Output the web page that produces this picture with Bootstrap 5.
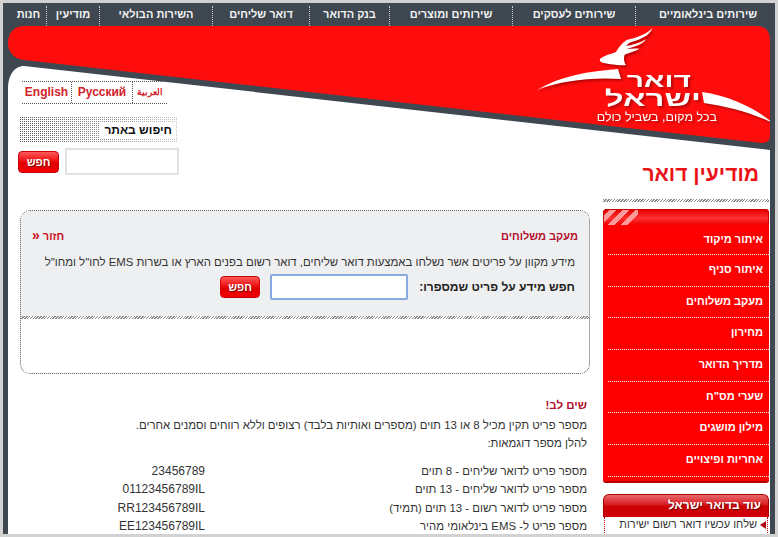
<!DOCTYPE html>
<html lang="he" dir="rtl">
<head>
  <meta charset="UTF-8" />
  <title>מודיעין דואר</title>
  <link href="https://cdn.jsdelivr.net/npm/bootstrap@5.3.0/dist/css/bootstrap.min.css" rel="stylesheet">
  <style>
    html, body { height: 537px; overflow: hidden; background: #d2d2d2; }
    body { font-family: "Liberation Sans", Arial, sans-serif; font-size: 11.4px; color: #333; }
    .sheet {
      height: 537px;
      border: 3px solid #d2d2d2;
      padding: 0 5px;
      background: #3f4750;
      overflow: hidden;
    }
    .top-nav {
      display: grid;
      grid-template-columns: 139px 123px 123px 80px 97px 113px 53px 39px;
      width: 767px;
      height: 23px;
      margin-right: -5px;
    }
    .top-nav a {
      display: block;
      margin-top: 3px;
      color: #f2f4f4;
      font-size: 11px;
      font-weight: bold;
      line-height: 17px;
      text-align: center;
      text-decoration: none;
      white-space: nowrap;
    }
    .top-nav a:first-child { padding-left: 5px; }
    .top-nav a:last-child { padding-left: 3px; }
    .top-nav a + a { border-right: 1px dotted #c8ccd0; }

    .stage { position: relative; height: 508px; background: #fff; }
    .head-art { position: absolute; top: 0; left: 0; width: 762px; height: 130px; }
    .head-art text { font-family: "Liberation Sans", Arial, sans-serif; fill: #fff; }
    .content-cols { position: relative; padding-right: 1px; }
    .side-col { width: 166px; flex: none; padding-top: 136px; }
    .main-col { width: 572px; flex: none; margin-right: 13px; padding-top: 55px; }

    .page-title { color: #ea1218; font-size: 21px; font-weight: bold; line-height: 24px; height: 35px; margin: 0; padding-right: 10px; }
    .hatch {
      height: 3px;
      background: repeating-linear-gradient(135deg, #8c8c8c 0 1px, #fff 1px 2px);
    }
    .side-hatch { margin: 2px 0 7px; }

    .red-menu { background: #f00; border-radius: 4px 4px 3px 3px; border-bottom: 2px solid #b30000; height: 274px; }
    .red-menu-top {
      height: 16px;
      border: 1px solid #c90000;
      border-bottom: 0;
      border-radius: 4px 4px 0 0;
      background:
        linear-gradient(135deg, transparent 0 4px, #ff9a9a 4px 9px, transparent 9px 13px, #ff9a9a 13px 18px, transparent 18px 22px, #ff9a9a 22px 27px, transparent 27px) left top / 34px 100% no-repeat,
        linear-gradient(#e60000, #ff3030 55%, #f00000);
    }
    .red-menu .list-group { margin-left: 0; margin-right: 0; padding-left: 5px; }
    .red-menu .list-group-item {
      background: transparent;
      border: 0;
      border-bottom: 1px dotted #fff;
      border-radius: 0;
      padding: 0 6px 0 0;
      height: 31.7px;
      line-height: 28px;
      color: #fff;
      font-size: 11px;
      font-weight: bold;
    }
    .red-menu .list-group-item:first-child { height: 30px; margin-top: 0; }

    .more-box { margin-top: 11px; }
    .more-head {
      height: 23px;
      border: 1px solid #a80000;
      border-bottom: 0;
      border-radius: 6px 6px 0 0;
      color: #fff;
      font-size: 12px;
      font-weight: bold;
      line-height: 20px;
      padding-right: 7px;
      text-shadow: 1px 1px 1px #600;
      background: linear-gradient(#e8686c, #d81a20 45%, #c00 50%, #d0000a);
    }
    .more-list {
      border: 1px dotted #c00;
      border-top: 0;
      list-style: none;
      margin: 0 1px;
      padding: 1px 1px 0 0;
      font-size: 11px;
      line-height: 13px;
    }
    .more-list li { padding-right: 9px; position: relative; width: 150px; }
    .more-list li::before {
      content: "";
      position: absolute;
      right: 0;
      top: 3px;
      border: 4px solid transparent;
      border-left: 0;
      border-right: 6px solid #b00010;
    }

    .lang-bar {
      width: 145px;
      height: 23px;
      margin-right: auto;
      margin-left: 4px;
      border-top: 1px dotted #555;
      border-bottom: 1px dotted #555;
      line-height: 21px;
    }
    .lang-bar a { color: #d3222a; font-size: 12px; font-weight: bold; text-align: center; text-decoration: none; }
    .lang-bar a + a { border-right: 1px dotted #555; }
    .lang-bar .lang-ar { font-size: 9px; flex: 0 0 34px; }
    .lang-bar .lang-ru { flex: 0 0 61px; }
    .lang-bar .lang-en { flex: 0 0 50px; }

    .site-search { width: 158px; margin-right: auto; margin-left: 2px; margin-top: 13px; }
    .search-head { position: relative; height: 26px; padding: 5px 3px 0 0; }
    .search-head::before {
      content: "";
      position: absolute;
      inset: 0;
      background:
        repeating-linear-gradient(0deg, #fff 0 1px, transparent 1px 2px),
        repeating-linear-gradient(90deg, #555 0 1px, transparent 1px 2px);
      -webkit-mask-image: linear-gradient(to right, #000, rgba(0,0,0,.35));
      mask-image: linear-gradient(to right, #000, rgba(0,0,0,.35));
    }
    .search-head span {
      position: relative;
      display: inline-block;
      height: 16px;
      padding: 0 3px 0 4px;
      background: #fff;
      color: #111;
      font-size: 12px;
      font-weight: bold;
      line-height: 17px;
      white-space: nowrap;
    }
    .search-row { width: 161px; margin-top: 5px; margin-right: auto; }
    .search-row .form-control {
      width: 114px;
      height: 27px;
      border: 2px solid #e2e2e2;
      border-radius: 0;
      padding: 0 4px;
    }
    .search-btn {
      width: 41px;
      height: 22px;
      padding: 0;
      font-size: 11px;
      font-weight: bold;
      line-height: 19px;
      color: #fff;
      border: 1px solid #c8000c;
      border-radius: 4px;
      background: linear-gradient(#ff5a5a, #f01010 45%, #e00000 55%, #f40000);
      text-shadow: 1px 1px 1px #7a0000;
    }
    .search-row .search-btn { margin-top: 3px; }

    .track-panel {
      width: 570px;
      height: 164px;
      margin-top: 35px;
      border: 1px dotted #555;
      border-radius: 10px;
      overflow: hidden;
    }
    .track-top { height: 105px; background: #eeeff1; padding: 18px 11px 0 11px; }
    .track-title { color: #b30f2e; font-size: 11px; font-weight: bold; line-height: 15px; }
    .track-title a { color: #c8101e; text-decoration: none; }
    .track-title a b { font-size: 14px; line-height: 12px; }
    .track-desc { margin: 10px 3px 0 0; line-height: 16px; white-space: nowrap; }
    .track-form { margin: 4px 3px 0 0; }
    .track-form label { flex: 0 0 167px; font-size: 12px; font-weight: bold; color: #222; white-space: nowrap; }
    .track-form .form-control {
      flex: 0 0 138px;
      width: 138px;
      height: 26px;
      border: 2px solid #8aa9e0;
      border-radius: 2px;
      padding: 0 4px;
    }
    .track-form .search-btn { width: 40px; margin-right: 10px; }

    .notes { margin-top: 23px; margin-right: 3px; color: #333; }
    .notes-title { color: #b30f2e; font-size: 11.5px; font-weight: bold; line-height: 16px; margin: 0 0 3px; }
    .notes p { line-height: 18px; margin: 0; }
    .sample-rows { margin-top: 10px; }
    .sample-row { line-height: 18.3px; }
    .sample-row span:first-child { width: 382px; flex: none; }
    .sample-row span:last-child { direction: ltr; width: 185px; font-size: 12px; text-align: right; }
  </style>
</head>
<body>
<div class="sheet">
  <nav class="top-nav">
    <a href="#">שירותים בינלאומיים</a>
    <a href="#">שירותים לעסקים</a>
    <a href="#">שירותים ומוצרים</a>
    <a href="#">בנק הדואר</a>
    <a href="#">דואר שליחים</a>
    <a href="#">השירות הבולאי</a>
    <a href="#">מודיעין</a>
    <a href="#">חנות</a>
  </nav>

  <div class="stage">
    <svg class="head-art" viewBox="8 26 762 130" preserveAspectRatio="none">
      <rect x="8" y="26" width="762" height="130" fill="#3f4750"/>
      <path d="M8 88 C8 76 14 66 24 66 L770 150 L770 156 L8 156 Z" fill="#fff"/>
      <path d="M24 26 L756 26 Q770 26 770 40 L770 136 Q770 143 762 143 L24 60 C14 59 8 52 8 43 C8 33 14 26 24 26 Z" fill="#ff0d0d"/>
      <g style="filter: drop-shadow(2px 2px 1px rgba(120,0,0,.55))">
        <g transform="translate(590 24) scale(.3333)" fill="#fff">
          <path d="M30 104 C45 94 62 90 78 84 C86 70 96 58 110 48 C130 42 165 36 187 12 C180 34 150 48 118 56 L108 66 C125 64 148 58 168 46 C158 62 130 70 106 76 C120 74 135 72 148 74 C132 84 116 86 104 92 C100 102 102 114 108 124 C84 124 56 120 38 116 C32 114 28 110 30 104 Z"/>
        </g>
        <path d="M537 90 C560 76 590 71 618 69 L621 79 C590 77 560 81 537 90 Z" fill="#fff"/>
        <path d="M702 92 C730 96 755 108 773 123 C750 112 725 106 704 103 Z" fill="#fff"/>
        <text transform="translate(691 87) scale(1.5 1)" font-size="20" font-weight="bold">דואר</text>
        <text transform="translate(701 106) scale(1.5 1)" font-size="22" font-weight="bold">ישראל</text>
        <text x="717" y="121" font-size="12.5">בכל מקום, בשביל כולם</text>
      </g>
    </svg>

    <div class="content-cols d-flex">
      <aside class="side-col">
        <h1 class="page-title">מודיעין דואר</h1>
        <div class="hatch side-hatch"></div>
        <div class="red-menu">
          <div class="red-menu-top"></div>
          <div class="list-group">
            <a href="#" class="list-group-item">איתור מיקוד</a>
            <a href="#" class="list-group-item">איתור סניף</a>
            <a href="#" class="list-group-item">מעקב משלוחים</a>
            <a href="#" class="list-group-item">מחירון</a>
            <a href="#" class="list-group-item">מדריך הדואר</a>
            <a href="#" class="list-group-item">שערי מס"ח</a>
            <a href="#" class="list-group-item">מילון מושגים</a>
            <a href="#" class="list-group-item">אחריות ופיצויים</a>
          </div>
        </div>
        <div class="more-box">
          <div class="more-head">עוד בדואר ישראל</div>
          <ul class="more-list">
            <li>שלחו עכשיו דואר רשום ישירות מהמחשב</li>
          </ul>
        </div>
      </aside>

      <main class="main-col">
        <div class="lang-bar d-flex">
          <a href="#" class="lang-ar">العربية</a>
          <a href="#" class="lang-ru">Русский</a>
          <a href="#" class="lang-en">English</a>
        </div>

        <div class="site-search">
          <div class="search-head"><span>חיפוש באתר</span></div>
        </div>
        <div class="search-row d-flex justify-content-between">
          <input class="form-control" type="text" aria-label="חיפוש באתר">
          <button class="btn search-btn" type="button">חפש</button>
        </div>

        <section class="track-panel">
          <div class="track-top">
            <div class="track-title d-flex justify-content-between">
              <span>מעקב משלוחים</span>
              <a href="#">חזור <b>&laquo;</b></a>
            </div>
            <p class="track-desc">מידע מקוון על פריטים אשר נשלחו באמצעות דואר שליחים, דואר רשום בפנים הארץ או בשרות EMS לחו"ל ומחו"ל</p>
            <div class="track-form d-flex align-items-center">
              <label>חפש מידע על פריט שמספרו:</label>
              <input class="form-control" type="text" aria-label="מספר פריט">
              <button class="btn search-btn" type="button">חפש</button>
            </div>
          </div>
          <div class="hatch"></div>
        </section>

        <section class="notes">
          <h2 class="notes-title">שים לב!</h2>
          <p>מספר פריט תקין מכיל 8 או 13 תוים (מספרים ואותיות בלבד) רצופים וללא רווחים וסמנים אחרים.</p>
          <p>להלן מספר דוגמאות:</p>
          <div class="sample-rows">
            <div class="sample-row d-flex"><span>מספר פריט לדואר שליחים - 8 תוים</span><span>23456789</span></div>
            <div class="sample-row d-flex"><span>מספר פריט לדואר שליחים - 13 תוים</span><span>01123456789IL</span></div>
            <div class="sample-row d-flex"><span>מספר פריט לדואר רשום - 13 תוים (תמיד)</span><span>RR123456789IL</span></div>
            <div class="sample-row d-flex"><span>מספר פריט ל- EMS בינלאומי מהיר</span><span>EE123456789IL</span></div>
          </div>
        </section>
      </main>
    </div>
  </div>
</div>
<script src="https://cdn.jsdelivr.net/npm/bootstrap@5.3.0/dist/js/bootstrap.bundle.min.js"></script>
</body>
</html>
